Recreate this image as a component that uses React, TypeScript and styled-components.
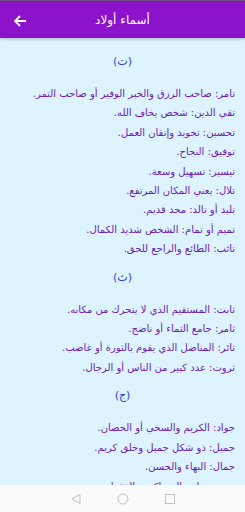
import React from "react";
import styled, { createGlobalStyle } from "styled-components";

const GlobalStyle = createGlobalStyle`
    html, body {
        margin: 0;
        padding: 0;
        background: #ffffff;
    }
    * {
        box-sizing: border-box;
    }
`;

const Screen = styled.div`
    width: 245px;
    height: 512px;
    display: flex;
    flex-direction: column;
    overflow: hidden;
    font-family: "DejaVu Sans", "Noto Sans", sans-serif;
`;

const AppBar = styled.header`
    height: 38px;
    flex-shrink: 0;
    display: flex;
    align-items: center;
    position: relative;
    background-color: #8d12cc;
    border-top: 1px solid #6f4a80;
    box-shadow: 0 1px 3px rgba(0, 0, 0, 0.25);
    z-index: 1;
    & > .back {
        width: 40px;
        display: flex;
        justify-content: center;
        padding-top: 2px;
    }
    & > h1 {
        position: absolute;
        left: 0;
        right: 0;
        margin: 0;
        text-align: center;
        color: #ffffff;
        font-size: 12px;
        font-weight: normal;
        pointer-events: none;
    }
`;

const Content = styled.main`
    flex: 1;
    overflow: hidden;
    background-color: #ddf3fe;
    padding: 5px 10px 0 10px;
    direction: rtl;
`;

const SectionTitle = styled.h2`
    margin: 9px 0 12px 0;
    height: 20px;
    line-height: 20px;
    text-align: center;
    color: #2a44e0;
    font-size: 11px;
    font-weight: normal;
`;

const Line = styled.p`
    margin: 0;
    line-height: 19.4px;
    font-size: 10px;
    color: #6c1cb0;
    text-align: right;
    white-space: nowrap;
`;

const NavBar = styled.nav`
    height: 27px;
    flex-shrink: 0;
    background-color: #fafafa;
    display: flex;
    justify-content: center;
    align-items: center;
    gap: 35px;
    & > svg {
        display: block;
    }
`;

const sections = [
    {
        letter: "(ت)",
        lines: [
            "تامر: صاحب الرزق والخير الوفير أو صاحب التمر.",
            "تقي الدين: شخص يخاف الله.",
            "تحسين: تجويد وإتقان العمل.",
            "توفيق: النجاح.",
            "تيسير: تسهيل وسعة.",
            "تلال: يعني المكان المرتفع.",
            "تليد أو تالد: مجد قديم.",
            "تميم أو تمام: الشخص شديد الكمال.",
            "تائب: الطائع والراجع للحق.",
        ],
    },
    {
        letter: "(ث)",
        lines: [
            "ثابت: المستقيم الذي لا يتحرك من مكانه.",
            "ثامر: جامع الثماء أو ناضج.",
            "ثائر: المناضل الذي يقوم بالثورة أو غاضب.",
            "ثروت: عدد كبير من الناس أو الرجال.",
        ],
    },
    {
        letter: "(ج)",
        lines: [
            "جواد: الكريم والسخي أو الحصان.",
            "جميل: ذو شكل جميل وخلق كريم.",
            "جمال: البهاء والحسن.",
            "جبر: مساعد المساكين والفقراء.",
        ],
    },
];

const App = () => {
    return (
        <>
            <GlobalStyle />
            <Screen>
                <AppBar>
                    <div className="back">
                        <svg width="14" height="14" viewBox="0 0 14 14">
                            <path
                                d="M13 7H2M7 2L2 7l5 5"
                                fill="none"
                                stroke="#ffffff"
                                strokeWidth="1.8"
                            />
                        </svg>
                    </div>
                    <h1 dir="rtl">أسماء أولاد</h1>
                </AppBar>
                <Content>
                    {sections.map((s) => (
                        <section key={s.letter}>
                            <SectionTitle>{s.letter}</SectionTitle>
                            {s.lines.map((l) => (
                                <Line key={l}>{l}</Line>
                            ))}
                        </section>
                    ))}
                </Content>
                <NavBar>
                    <svg width="12" height="12" viewBox="0 0 12 12">
                        <path d="M10 1.5v9L2 6z" fill="none" stroke="#c2c2c2" strokeWidth="1" />
                    </svg>
                    <svg width="12" height="12" viewBox="0 0 12 12">
                        <circle cx="6" cy="6" r="5" fill="none" stroke="#c2c2c2" strokeWidth="1" />
                    </svg>
                    <svg width="12" height="12" viewBox="0 0 12 12">
                        <rect x="1.5" y="1.5" width="9" height="9" fill="none" stroke="#c2c2c2" strokeWidth="1" />
                    </svg>
                </NavBar>
            </Screen>
        </>
    );
};

export default App;
